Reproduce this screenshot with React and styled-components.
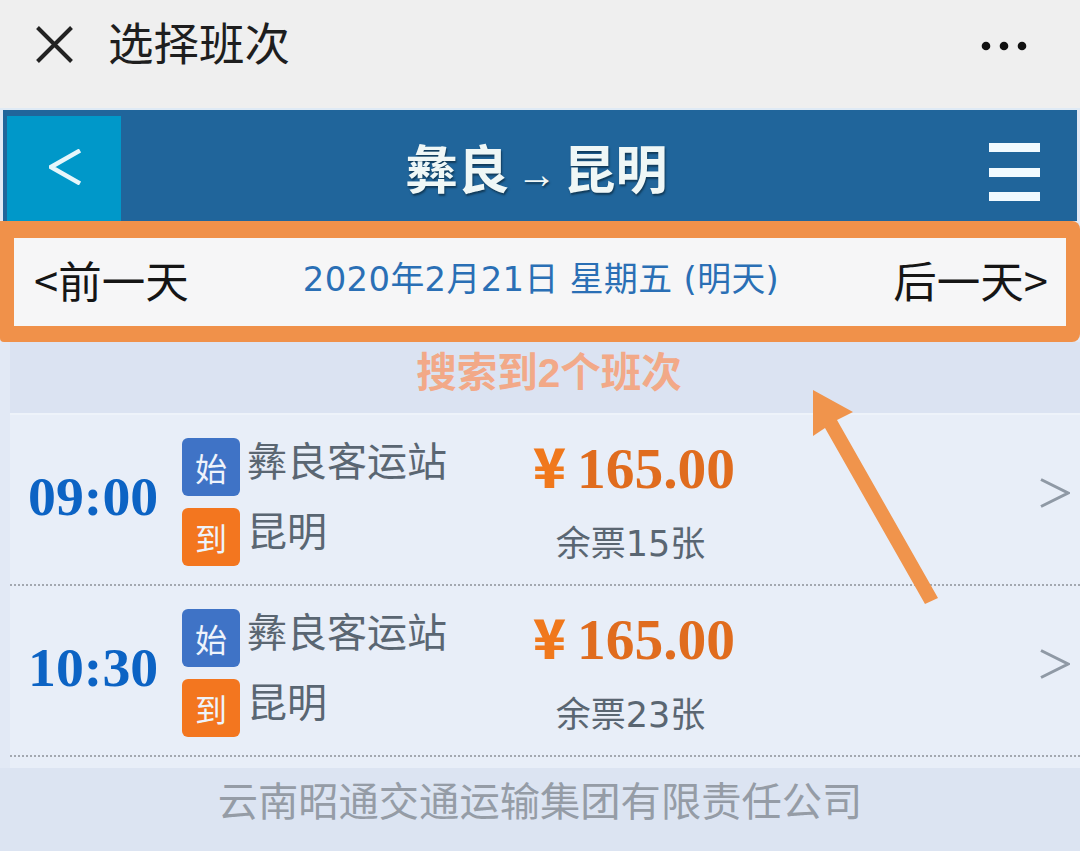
import React from 'react';
import styled, { createGlobalStyle } from 'styled-components';

const CJK = '"Noto Sans CJK SC", "Noto Sans", sans-serif';
const SERIF = '"Liberation Serif", "Noto Sans CJK SC", serif';

const Global = createGlobalStyle`
  html, body { margin: 0; padding: 0; background: #efefef; }
  * { box-sizing: border-box; }
`;
const Page = styled.div`
  position: relative;
  width: 1080px;
  height: 851px;
  overflow: hidden;
  font-family: ${CJK};
  display: flex;
  flex-direction: column;
  background: #efefef;
`;
const TopBar = styled.header`
  height: 108px;
  flex: none;
  display: flex;
  align-items: center;
  padding: 0 53px 20px 36px;
  background: #efefef;
`;
const PageTitle = styled.h1`
  margin: -6px 0 0 35px;
  flex: 1;
  font-size: 45.5px;
  line-height: 54px;
  font-weight: 400;
  color: #1e1e1e;
`;
const MoreWrap = styled.div`
  display: flex;
  margin-top: 4px;
`;
const Frame = styled.div`
  flex: 1;
  display: flex;
  flex-direction: column;
  border-top: 2px solid #dfeaf5;
  background: #e2e9f5;
`;
const Header = styled.div`
  height: 111px;
  flex: none;
  margin: 0 3px;
  padding: 6px 37px 0 4px;
  background: #20659b;
  display: flex;
  align-items: stretch;
`;
const BackButton = styled.div`
  width: 114px;
  background: #0098c9;
  display: flex;
  align-items: center;
  justify-content: center;
  padding: 0 0 3px 2px;
`;
const RouteTitle = styled.div`
  flex: 1;
  display: flex;
  align-items: center;
  justify-content: center;
  padding: 0 37px 4px 0;
  gap: 7px;
  color: #eff7f6;
  font-size: 52px;
  line-height: 60px;
  font-weight: 700;
  text-shadow: 1px 2px 2px rgba(10, 40, 60, 0.7);
`;
const RouteArrow = styled.span`
  font-size: 40px;
  font-weight: 400;
  padding-top: 14px;
  font-family: "Liberation Sans", sans-serif;
`;
const MenuIcon = styled.div`
  width: 51px;
  height: 58px;
  margin-top: 27px;
  display: flex;
  flex-direction: column;
  justify-content: space-between;
`;
const MenuBar = styled.span`
  display: block;
  height: 9px;
  background: #f1faff;
`;
const DateBar = styled.div`
  height: 121px;
  flex: none;
  background: #f0914a;
  padding: 17px 14px 16px 14px;
  border-radius: 0 8px 8px 4px;
`;
const DateInner = styled.div`
  height: 100%;
  background: #f6f6f7;
  display: flex;
  align-items: center;
  justify-content: space-between;
  padding: 0 18px 6px 20px;
  font-size: 43.5px;
  color: #151515;
`;
const DateLabel = styled.span`
  font-size: 33.8px;
  letter-spacing: 0.4px;
  color: #2a6fb5;
  font-family: "DejaVu Sans", ${CJK};
  margin: -6px 0 0 0;
`;
const Summary = styled.div`
  height: 73px;
  flex: none;
  margin-left: 10px;
  display: flex;
  align-items: center;
  justify-content: center;
  padding: 0 0 17px 8px;
  background: #dbe3f2;
  font-size: 40.5px;
  font-weight: 700;
  color: #f2a988;
  font-family: "Liberation Sans", ${CJK};
  border-bottom: 2px solid #eef3fa;
`;
const List = styled.div`
  margin-left: 10px;
  background: #e8eef8;
  height: 353px;
  flex: none;
`;
const Row = styled.div`
  height: 171px;
  display: grid;
  grid-template-columns: 172px 345px 1fr 40px;
  align-items: center;
  border-bottom: 2px dotted #a3a8b0;
`;
const Time = styled.div`
  font-family: ${SERIF};
  font-weight: 700;
  font-size: 55.8px;
  line-height: 60px;
  color: #0c63c4;
  padding-left: 18px;
  margin-top: -7px;
`;
const Stops = styled.div`
  display: flex;
  flex-direction: column;
  gap: 12px;
  margin-top: 4px;
`;
const Stop = styled.div`
  display: flex;
  align-items: center;
  gap: 7px;
  height: 58px;
  font-size: 40px;
  line-height: 48px;
  color: #5a6672;
`;
const StopName = styled.span`
  margin-top: -16px;
`;
const Badge = styled.span`
  width: 58px;
  height: 58px;
  flex: none;
  border-radius: 6px;
  display: flex;
  align-items: center;
  justify-content: center;
  color: #eef3fb;
  font-size: 32px;
  line-height: 36px;
  background: ${p => (p.$kind === 'end' ? '#f3761f' : '#3f73c6')};
`;
const Fare = styled.div`
  display: flex;
  flex-direction: column;
  align-items: center;
  margin-top: -1px;
  width: 240px;
  margin-left: -13px;
`;
const Price = styled.div`
  display: flex;
  align-items: baseline;
  font-family: ${SERIF};
  font-weight: 700;
  font-size: 57.5px;
  line-height: 64px;
  color: #e06c1e;
`;
const Yen = styled.span`
  color: #f0781c;
  font-family: "Noto Sans CJK SC", sans-serif;
  font-weight: 900;
  font-size: 54px;
  width: 44px;
`;
const Tickets = styled.div`
  margin: 21px 0 0 -7px;
  font-size: 35px;
  line-height: 44px;
  color: #5a6672;
  font-family: "DejaVu Sans", ${CJK};
`;
const Footer = styled.footer`
  flex: 1;
  text-align: center;
  font-size: 40.3px;
  line-height: 48px;
  padding-top: 7px;
  color: #959ca6;
  background: #dce4f2;
`;
const ArrowOverlay = styled.svg`
  position: absolute;
  left: 0;
  top: 0;
  pointer-events: none;
`;
const RowChevron = styled.div`
  margin-top: -14px;
  display: flex;
`;

const CloseIcon = () => (
  <svg width="37" height="37" viewBox="0 0 37 37" style={{ flex: 'none' }}>
    <path d="M1.5 1.5 L35.5 35.5 M35.5 1.5 L1.5 35.5" stroke="#222" strokeWidth="4" fill="none" />
  </svg>
);
const MoreIcon = () => (
  <svg width="46" height="10" viewBox="0 0 46 10">
    <circle cx="5" cy="5" r="4.3" fill="#111" />
    <circle cx="23" cy="5" r="4.3" fill="#111" />
    <circle cx="41" cy="5" r="4.3" fill="#111" />
  </svg>
);
const Chevron = ({ dir, color, w, h, sw }) => (
  <svg width={w} height={h} viewBox={`0 0 ${w} ${h}`}>
    <path
      d={dir === 'left' ? `M${w - 1} 1.5 L2 ${h / 2} L${w - 1} ${h - 1.5}` : `M1 1.5 L${w - 2} ${h / 2} L1 ${h - 1.5}`}
      stroke={color}
      strokeWidth={sw}
      fill="none"
    />
  </svg>
);

const trips = [
  { time: '09:00', left: 15 },
  { time: '10:30', left: 23 },
];

export default function App() {
  return (
    <Page>
      <Global />
      <TopBar>
        <CloseIcon />
        <PageTitle>选择班次</PageTitle>
        <MoreWrap>
          <MoreIcon />
        </MoreWrap>
      </TopBar>
      <Frame>
        <Header>
          <BackButton>
            <Chevron dir="left" color="#e6f6fb" w={32} h={36} sw={4.5} />
          </BackButton>
          <RouteTitle>
            <span>彝良</span>
            <RouteArrow>→</RouteArrow>
            <span>昆明</span>
          </RouteTitle>
          <MenuIcon>
            <MenuBar />
            <MenuBar />
            <MenuBar />
          </MenuIcon>
        </Header>
        <DateBar>
          <DateInner>
            <span>&lt;前一天</span>
            <DateLabel>2020年2月21日 星期五 (明天)</DateLabel>
            <span>后一天&gt;</span>
          </DateInner>
        </DateBar>
        <Summary>搜索到2个班次</Summary>
        <List>
          {trips.map(t => (
            <Row key={t.time}>
              <Time>{t.time}</Time>
              <Stops>
                <Stop>
                  <Badge $kind="start">始</Badge>
                  <StopName>彝良客运站</StopName>
                </Stop>
                <Stop>
                  <Badge $kind="end">到</Badge>
                  <StopName>昆明</StopName>
                </Stop>
              </Stops>
              <Fare>
                <Price>
                  <Yen>¥</Yen>165.00
                </Price>
                <Tickets>余票{t.left}张</Tickets>
              </Fare>
              <RowChevron>
                <Chevron dir="right" color="#8f99a5" w={30} h={30} sw={3} />
              </RowChevron>
            </Row>
          ))}
        </List>
        <Footer>云南昭通交通运输集团有限责任公司</Footer>
      </Frame>
      <ArrowOverlay width="1080" height="851" viewBox="0 0 1080 851">
        <polygon points="813,390 853,412 837,420 938,598 925,604 825,428 813,436" fill="#f0944c" />
      </ArrowOverlay>
    </Page>
  );
}
